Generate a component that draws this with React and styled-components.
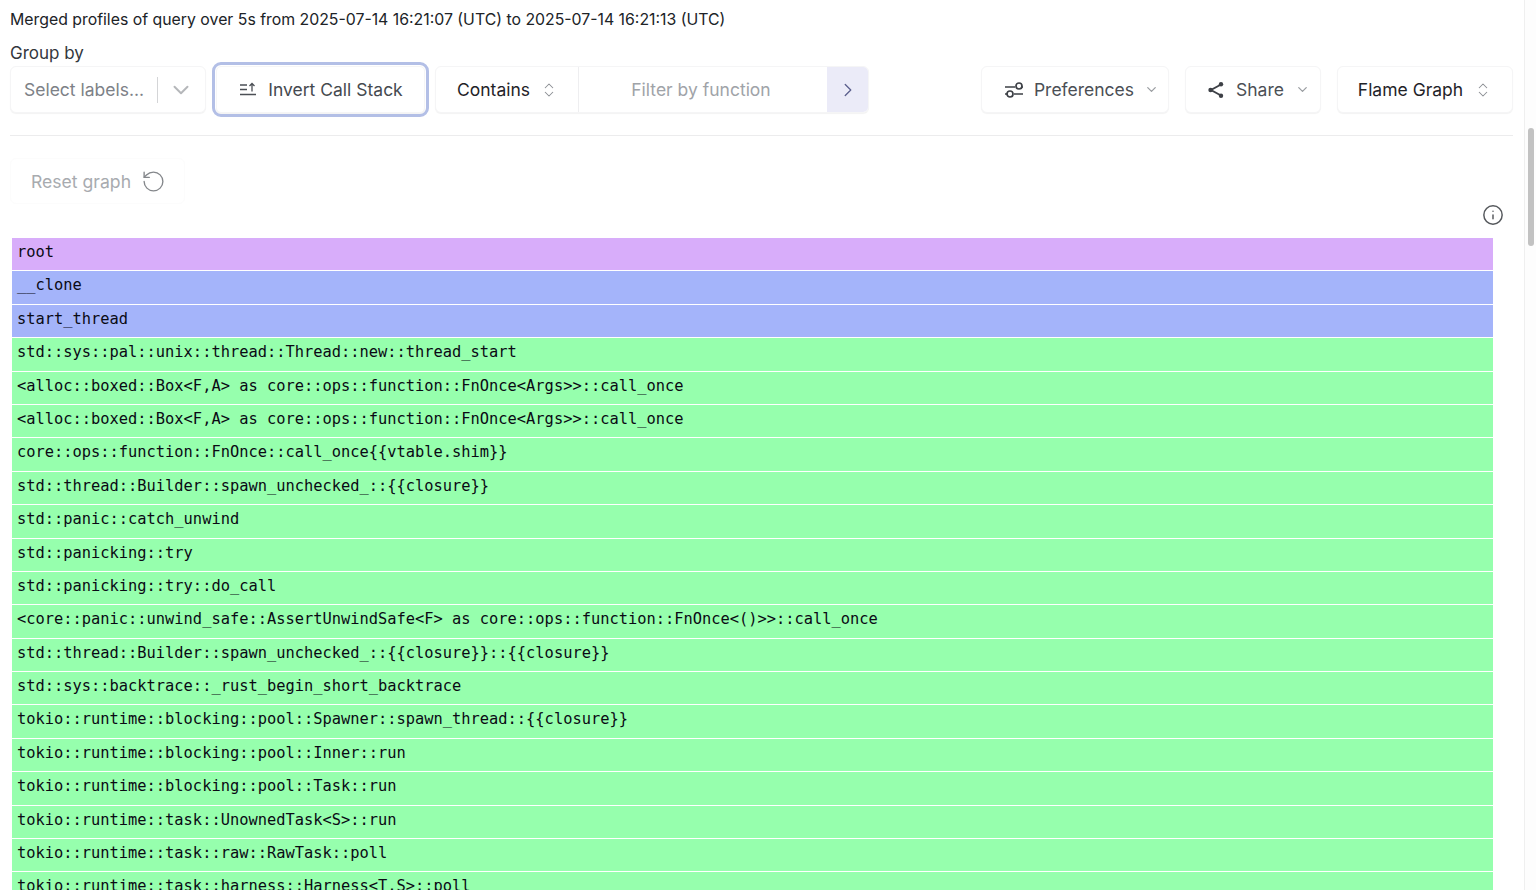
import styled, { createGlobalStyle } from "styled-components";
import { ChevronDown, ChevronRight, ChevronsUpDown, Info, RotateCcw } from "lucide-react";

const frames = [
  { name: "root", kind: "purple" },
  { name: "__clone", kind: "blue" },
  { name: "start_thread", kind: "blue" },
  { name: "std::sys::pal::unix::thread::Thread::new::thread_start" },
  { name: "<alloc::boxed::Box<F,A> as core::ops::function::FnOnce<Args>>::call_once" },
  { name: "<alloc::boxed::Box<F,A> as core::ops::function::FnOnce<Args>>::call_once" },
  { name: "core::ops::function::FnOnce::call_once{{vtable.shim}}" },
  { name: "std::thread::Builder::spawn_unchecked_::{{closure}}" },
  { name: "std::panic::catch_unwind" },
  { name: "std::panicking::try" },
  { name: "std::panicking::try::do_call" },
  { name: "<core::panic::unwind_safe::AssertUnwindSafe<F> as core::ops::function::FnOnce<()>>::call_once" },
  { name: "std::thread::Builder::spawn_unchecked_::{{closure}}::{{closure}}" },
  { name: "std::sys::backtrace::_rust_begin_short_backtrace" },
  { name: "tokio::runtime::blocking::pool::Spawner::spawn_thread::{{closure}}" },
  { name: "tokio::runtime::blocking::pool::Inner::run" },
  { name: "tokio::runtime::blocking::pool::Task::run" },
  { name: "tokio::runtime::task::UnownedTask<S>::run" },
  { name: "tokio::runtime::task::raw::RawTask::poll" },
  { name: "tokio::runtime::task::harness::Harness<T,S>::poll" },
];

const frameColors = {
  purple: "#d8adfa",
  blue: "#a4b4fa",
  green: "#96ffad",
};

const GlobalStyle = createGlobalStyle`
  html, body {
    margin: 0;
    height: 100%;
    overflow: hidden;
    background: #fff;
  }
  * {
    box-sizing: border-box;
  }
`;

const Page = styled.div`
  display: flex;
  height: 890px;
  overflow: hidden;
  font-family: Inter, "Liberation Sans", sans-serif;
  color: #1f2328;
`;

const Main = styled.main`
  flex: 1;
  min-width: 0;
  padding: 11px 11px 0 10px;
`;

const Scrollbar = styled.div`
  width: 12px;
  flex-shrink: 0;
  padding: 128px 2px 0 3px;
  background: #fdfdfd;
  border-left: 1px solid #efefef;
`;

const Thumb = styled.div`
  height: 118px;
  border-radius: 4px;
  background: #c2c2c2;
`;

const Summary = styled.div`
  font-size: 15.84px;
  line-height: 18px;
  color: #202327;
`;

const GroupLabel = styled.div`
  margin-top: 14px;
  font-size: 17px;
  line-height: 20px;
  color: #33373d;
`;

const Toolbar = styled.div`
  display: flex;
  align-items: center;
  height: 47px;
  margin-top: 3px;
`;

const Card = styled.div`
  display: flex;
  align-items: center;
  height: 47px;
  background: #fff;
  border-radius: 6px;
  border: 1px solid #f5f5f6;
  box-shadow: 0 1px 1px rgba(0, 0, 0, 0.05);
  font-size: 17.5px;
`;

const GroupSelect = styled(Card)`
  width: 196px;
  padding-left: 13px;
  color: #7d8187;
`;

const SelectDivider = styled.span`
  width: 1px;
  height: 26px;
  margin: 0 10px 0 13px;
  background: #d4d5d7;
`;

const InvertButton = styled(Card)`
  width: 209px;
  margin-left: 10px;
  padding-left: 2px;
  justify-content: center;
  gap: 12px;
  color: #45494f;
  outline: 3px solid #b3bfe6;
  outline-offset: 1.5px;
  border-radius: 5px;
`;

const FilterGroup = styled(Card)`
  margin-left: 10px;
  width: 434px;
  overflow: hidden;
`;

const MatchSelect = styled.div`
  display: flex;
  align-items: center;
  width: 143px;
  height: 100%;
  padding-left: 21px;
  gap: 10px;
  border-right: 1px solid #eeeef0;
`;

const FilterInput = styled.div`
  flex: 1;
  padding-right: 4px;
  text-align: center;
  color: #a0a3a8;
`;

const FilterSubmit = styled.div`
  display: flex;
  align-items: center;
  justify-content: center;
  width: 41px;
  height: 100%;
  background: #ebebf8;
  color: #5f6390;
`;

const Spacer = styled.div`
  flex: 1;
`;

const ActionButton = styled(Card)`
  justify-content: center;
  width: ${(p) => p.$width}px;
  margin-left: ${(p) => p.$gap}px;
  padding-left: ${(p) => p.$pad || 0}px;
  gap: ${(p) => p.$inner}px;
  color: ${(p) => p.$color || "#4b4f55"};
`;

const Divider = styled.div`
  height: 1px;
  margin-top: 22px;
  background: #ececed;
`;

const ResetButton = styled.div`
  display: flex;
  align-items: center;
  gap: 10px;
  width: 175px;
  height: 46px;
  margin-top: 22px;
  padding-left: 20px;
  border: 1px solid #fcfcfc;
  border-radius: 6px;
  font-size: 17.6px;
  color: #a8abaf;
`;

const InfoRow = styled.div`
  display: flex;
  justify-content: flex-end;
  height: 34px;
  padding: 0 9px 0 0;
  color: #55585c;
`;

const Graph = styled.div`
  margin: 0 20px 0 1.5px;
`;

const Frame = styled.div`
  height: 32.4px;
  margin-bottom: 1px;
  padding-left: 5.5px;
  background: ${(p) => frameColors[p.$kind || "green"]};
  font-family: "DejaVu Sans Mono", "Liberation Mono", monospace;
  font-size: 15.38px;
  line-height: 29px;
  color: #0a0a14;
  white-space: pre;
`;

function InvertIcon() {
  return (
    <svg width="16" height="15" viewBox="0 0 16 15" fill="none" stroke="#4b4f55" strokeWidth="1.3">
      <path d="M0 3h7M0 7.5h7M0 12.5h16" />
      <path d="M12 9.5V1.5M9.5 4l2.5-2.5L14.5 4" />
    </svg>
  );
}

function SlidersIcon() {
  return (
    <svg width="20" height="18" viewBox="0 0 20 18" fill="none" stroke="#3d4046" strokeWidth="1.7">
      <path d="M1 6h10M1 13h2M10 13h9M18 6h1" />
      <circle cx="15" cy="5" r="3" />
      <circle cx="6" cy="13" r="3" />
    </svg>
  );
}

function ShareIcon() {
  return (
    <svg width="18" height="18" viewBox="0 0 18 18" fill="#3d4046" stroke="#3d4046" strokeWidth="1.9">
      <path d="M14 3.5 4 9l10 5.5" fill="none" />
      <circle cx="14" cy="3.2" r="2.2" stroke="none" />
      <circle cx="3.6" cy="9" r="2.3" stroke="none" />
      <circle cx="14" cy="14.8" r="2.2" stroke="none" />
    </svg>
  );
}

export default function App() {
  return (
    <Page>
      <GlobalStyle />
      <Main>
        <Summary>Merged profiles of query over 5s from 2025-07-14 16:21:07 (UTC) to 2025-07-14 16:21:13 (UTC)</Summary>
        <GroupLabel>Group by</GroupLabel>
        <Toolbar>
          <GroupSelect>
            Select labels...
            <SelectDivider />
            <ChevronDown size={26} strokeWidth={1.8} color="#b5b7ba" />
          </GroupSelect>
          <InvertButton>
            <InvertIcon />
            Invert Call Stack
          </InvertButton>
          <FilterGroup>
            <MatchSelect>
              Contains
              <ChevronsUpDown size={18} strokeWidth={1.4} color="#8b8e93" />
            </MatchSelect>
            <FilterInput>Filter by function</FilterInput>
            <FilterSubmit>
              <ChevronRight size={22} strokeWidth={1.5} />
            </FilterSubmit>
          </FilterGroup>
          <Spacer />
          <ActionButton $width={188} $gap={0} $pad={13} $inner={10}>
            <SlidersIcon />
            Preferences
            <ChevronDown size={15} color="#9a9da1" />
          </ActionButton>
          <ActionButton $width={136} $gap={16} $pad={11} $inner={11}>
            <ShareIcon />
            Share
            <ChevronDown size={15} color="#9a9da1" />
          </ActionButton>
          <ActionButton $width={176} $gap={16} $inner={11} $color="#1f2328">
            Flame Graph
            <ChevronsUpDown size={18} strokeWidth={1.4} color="#8b8e93" />
          </ActionButton>
        </Toolbar>
        <Divider />
        <ResetButton>
          Reset graph
          <RotateCcw size={25} strokeWidth={1.3} color="#84878b" />
        </ResetButton>
        <InfoRow>
          <Info size={22} strokeWidth={1.6} />
        </InfoRow>
        <Graph>
          {frames.map((frame, i) => (
            <Frame key={i} $kind={frame.kind}>{frame.name}</Frame>
          ))}
        </Graph>
      </Main>
      <Scrollbar>
        <Thumb />
      </Scrollbar>
    </Page>
  );
}
